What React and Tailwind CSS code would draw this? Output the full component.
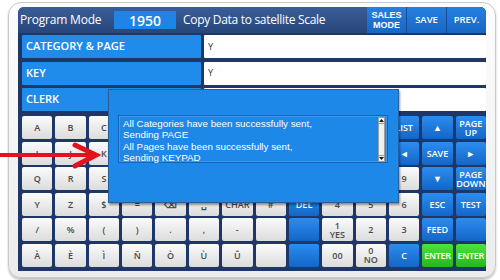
import React from 'react';

const W = (t) => ({ t, c: 'w' });
const B = (t) => ({ t, c: 'b' });
const G = (t) => ({ t, c: 'g' });

const rows = [
  [W('A'), W('B'), W('C'), W(''), W(''), W(''), W(''), W(''), B(''), B(''), B(''), B('LIST'), B('▲'), B('PAGE\nUP')],
  [W('I'), W('J'), W('K'), W(''), W(''), W(''), W(''), W(''), B(''), B(''), B(''), B('◄'), B('SAVE'), B('►')],
  [W('Q'), W('R'), W('S'), W(''), W(''), W(''), W(''), W(''), B(''), W(''), W(''), W('9'), B('▼'), B('PAGE\nDOWN')],
  [W('Y'), W('Z'), W('$'), W('='), W('⌫'), W('␣'), W('CHAR'), W('#'), B('DEL'), W('4'), W('5'), W('6'), B('ESC'), B('TEST')],
  [W('/'), W('%'), W('('), W(')'), W('.'), W(','), W('-'), W(''), B(''), W('1\nYES'), W('2'), W('3'), B('FEED'), B('')],
  [W('À'), W('È'), W('Ì'), W('Ñ'), W('Ò'), W('Ù'), W('Û'), W(''), B(''), W('00'), W('0\nNO'), B('C'), G('ENTER'), G('ENTER')],
];

function Key({ k }) {
  const base = 'flex items-center justify-center text-center whitespace-pre-line leading-[9px] text-[9px] font-semibold rounded-[2px] overflow-hidden';
  if (k.c === 'w')
    return <div className={base + ' bg-gradient-to-b from-[#fbfbfb] to-[#dcdcdc] text-[#4a4a4a]'}>{k.t}</div>;
  if (k.c === 'g')
    return <div className={base + ' bg-gradient-to-b from-[#4ee03a] to-[#22b81e] text-white tracking-[-0.3px]'}>{k.t}</div>;
  return <div className={base + ' bg-gradient-to-b from-[#2b8df0] to-[#1466c6] text-white'}>{k.t}</div>;
}

function Row({ label }) {
  return (
    <div className="flex h-[23px] gap-[3px]">
      <div className="w-[179px] bg-[#1f8ceb] text-white text-[11px] font-semibold flex items-center pl-[4px] rounded-[1px]">{label}</div>
      <div className="flex-1 bg-white text-[#333] text-[9px] flex items-center pl-[4px] rounded-[1px]">Y</div>
    </div>
  );
}

export default function App() {
  return (
    <div className="w-[500px] h-[280px] bg-white relative overflow-hidden font-['Open_Sans',sans-serif] pt-[2px] pl-[8px] pr-[4px]">
      <div className="h-[276px] rounded-[13px] border border-[#c9c9c9] bg-gradient-to-b from-[#fdfdfd] to-[#ececec] shadow-[0_2px_2px_rgba(0,0,0,0.25)] pt-[4px] pl-[9px] pr-[9px]">
        <div className="h-[264px] bg-[#1f3766] rounded-tl-[6px] rounded-tr-[6px] flex flex-col">
          {/* header */}
          <div className="h-[26px] flex items-center bg-gradient-to-b from-[#3b5e98] to-[#27467a] rounded-tl-[6px] rounded-tr-[6px]">
            <div className="w-[96px] pl-[2px] text-white text-[12px] tracking-[-0.2px]">Program Mode</div>
            <div className="w-[62px] h-[18px] bg-[#1f84e6] text-white text-[14px] font-semibold flex items-center justify-center">1950</div>
            <div className="ml-[7px] text-white text-[12px] tracking-[-0.3px]">Copy Data to satellite Scale</div>
            <div className="flex-1" />
            <div className="flex h-full gap-[1px] bg-[#1a4c94] rounded-tr-[6px] overflow-hidden">
              <div className="w-[39px] bg-gradient-to-b from-[#2580e0] to-[#1866c4] text-white text-[9px] font-bold leading-[10.5px] font-['Liberation_Sans',sans-serif] flex flex-col items-center justify-center text-center"><span>SALES</span><span>MODE</span></div>
              <div className="w-[39px] bg-gradient-to-b from-[#2580e0] to-[#1866c4] text-white text-[9.5px] font-semibold flex items-center justify-center">SAVE</div>
              <div className="w-[39px] bg-gradient-to-b from-[#2580e0] to-[#1866c4] text-white text-[9.5px] font-semibold flex items-center justify-center">PREV.</div>
            </div>
          </div>
          {/* rows */}
          <div className="pl-[4px] mt-[2px] flex flex-col gap-[3.5px]">
            <Row label="CATEGORY & PAGE" />
            <Row label="KEY" />
            <Row label="CLERK" />
          </div>
          {/* keypad */}
          <div className="pl-[4px] mt-[5px] h-[151px] grid grid-cols-[repeat(14,1fr)] grid-rows-6 gap-x-[3px] gap-y-[2.5px]">
            {rows.flat().map((k, i) => <Key key={i} k={k} />)}
          </div>
        </div>
      </div>

      {/* dialog */}
      <div className="absolute left-[108px] top-[89px] w-[291px] h-[114px] bg-[#1e88e8] border border-[#2a5d9c] shadow-[1px_2px_2px_rgba(0,0,0,0.4)]">
        <div className="absolute left-[9px] top-[25px] w-[270px] h-[48px] border border-[#1863b8] shadow-[inset_0_0_0_1px_rgba(120,180,240,0.35)]">
          <div className="pl-[4px] pt-[2px] text-white text-[9.8px] leading-[11.3px] font-['Liberation_Sans',sans-serif]">
            <div>All Categories have been successfully sent,</div>
            <div>Sending PAGE</div>
            <div>All Pages have been successfully sent,</div>
            <div>Sending KEYPAD</div>
          </div>
          <div className="absolute right-[2px] top-[1px] w-[7px] h-[45px] flex flex-col bg-[#e6e6e6]">
            <div className="h-[7px] bg-[#f4f4f4] border border-[#9a9a9a] flex items-center justify-center">
              <svg width="5" height="3" viewBox="0 0 5 3"><polygon points="2.5,0 5,3 0,3" fill="#111" /></svg>
            </div>
            <div className="flex-1 bg-[#f0f0f0] border-x border-[#a0a0a0]" />
            <div className="h-[7px] bg-[#f4f4f4] border border-[#9a9a9a] flex items-center justify-center">
              <svg width="5" height="3" viewBox="0 0 5 3"><polygon points="0,0 5,0 2.5,3" fill="#111" /></svg>
            </div>
          </div>
        </div>
      </div>

      {/* red arrow */}
      <svg className="absolute left-0 top-[140px]" width="105" height="32" viewBox="0 0 105 32">
        <line x1="0" y1="15" x2="94" y2="15" stroke="#e3121b" strokeWidth="4" />
        <polyline points="75,5 96,15 75,26" fill="none" stroke="#e3121b" strokeWidth="5" strokeLinejoin="miter" strokeLinecap="round" />
      </svg>
    </div>
  );
}
